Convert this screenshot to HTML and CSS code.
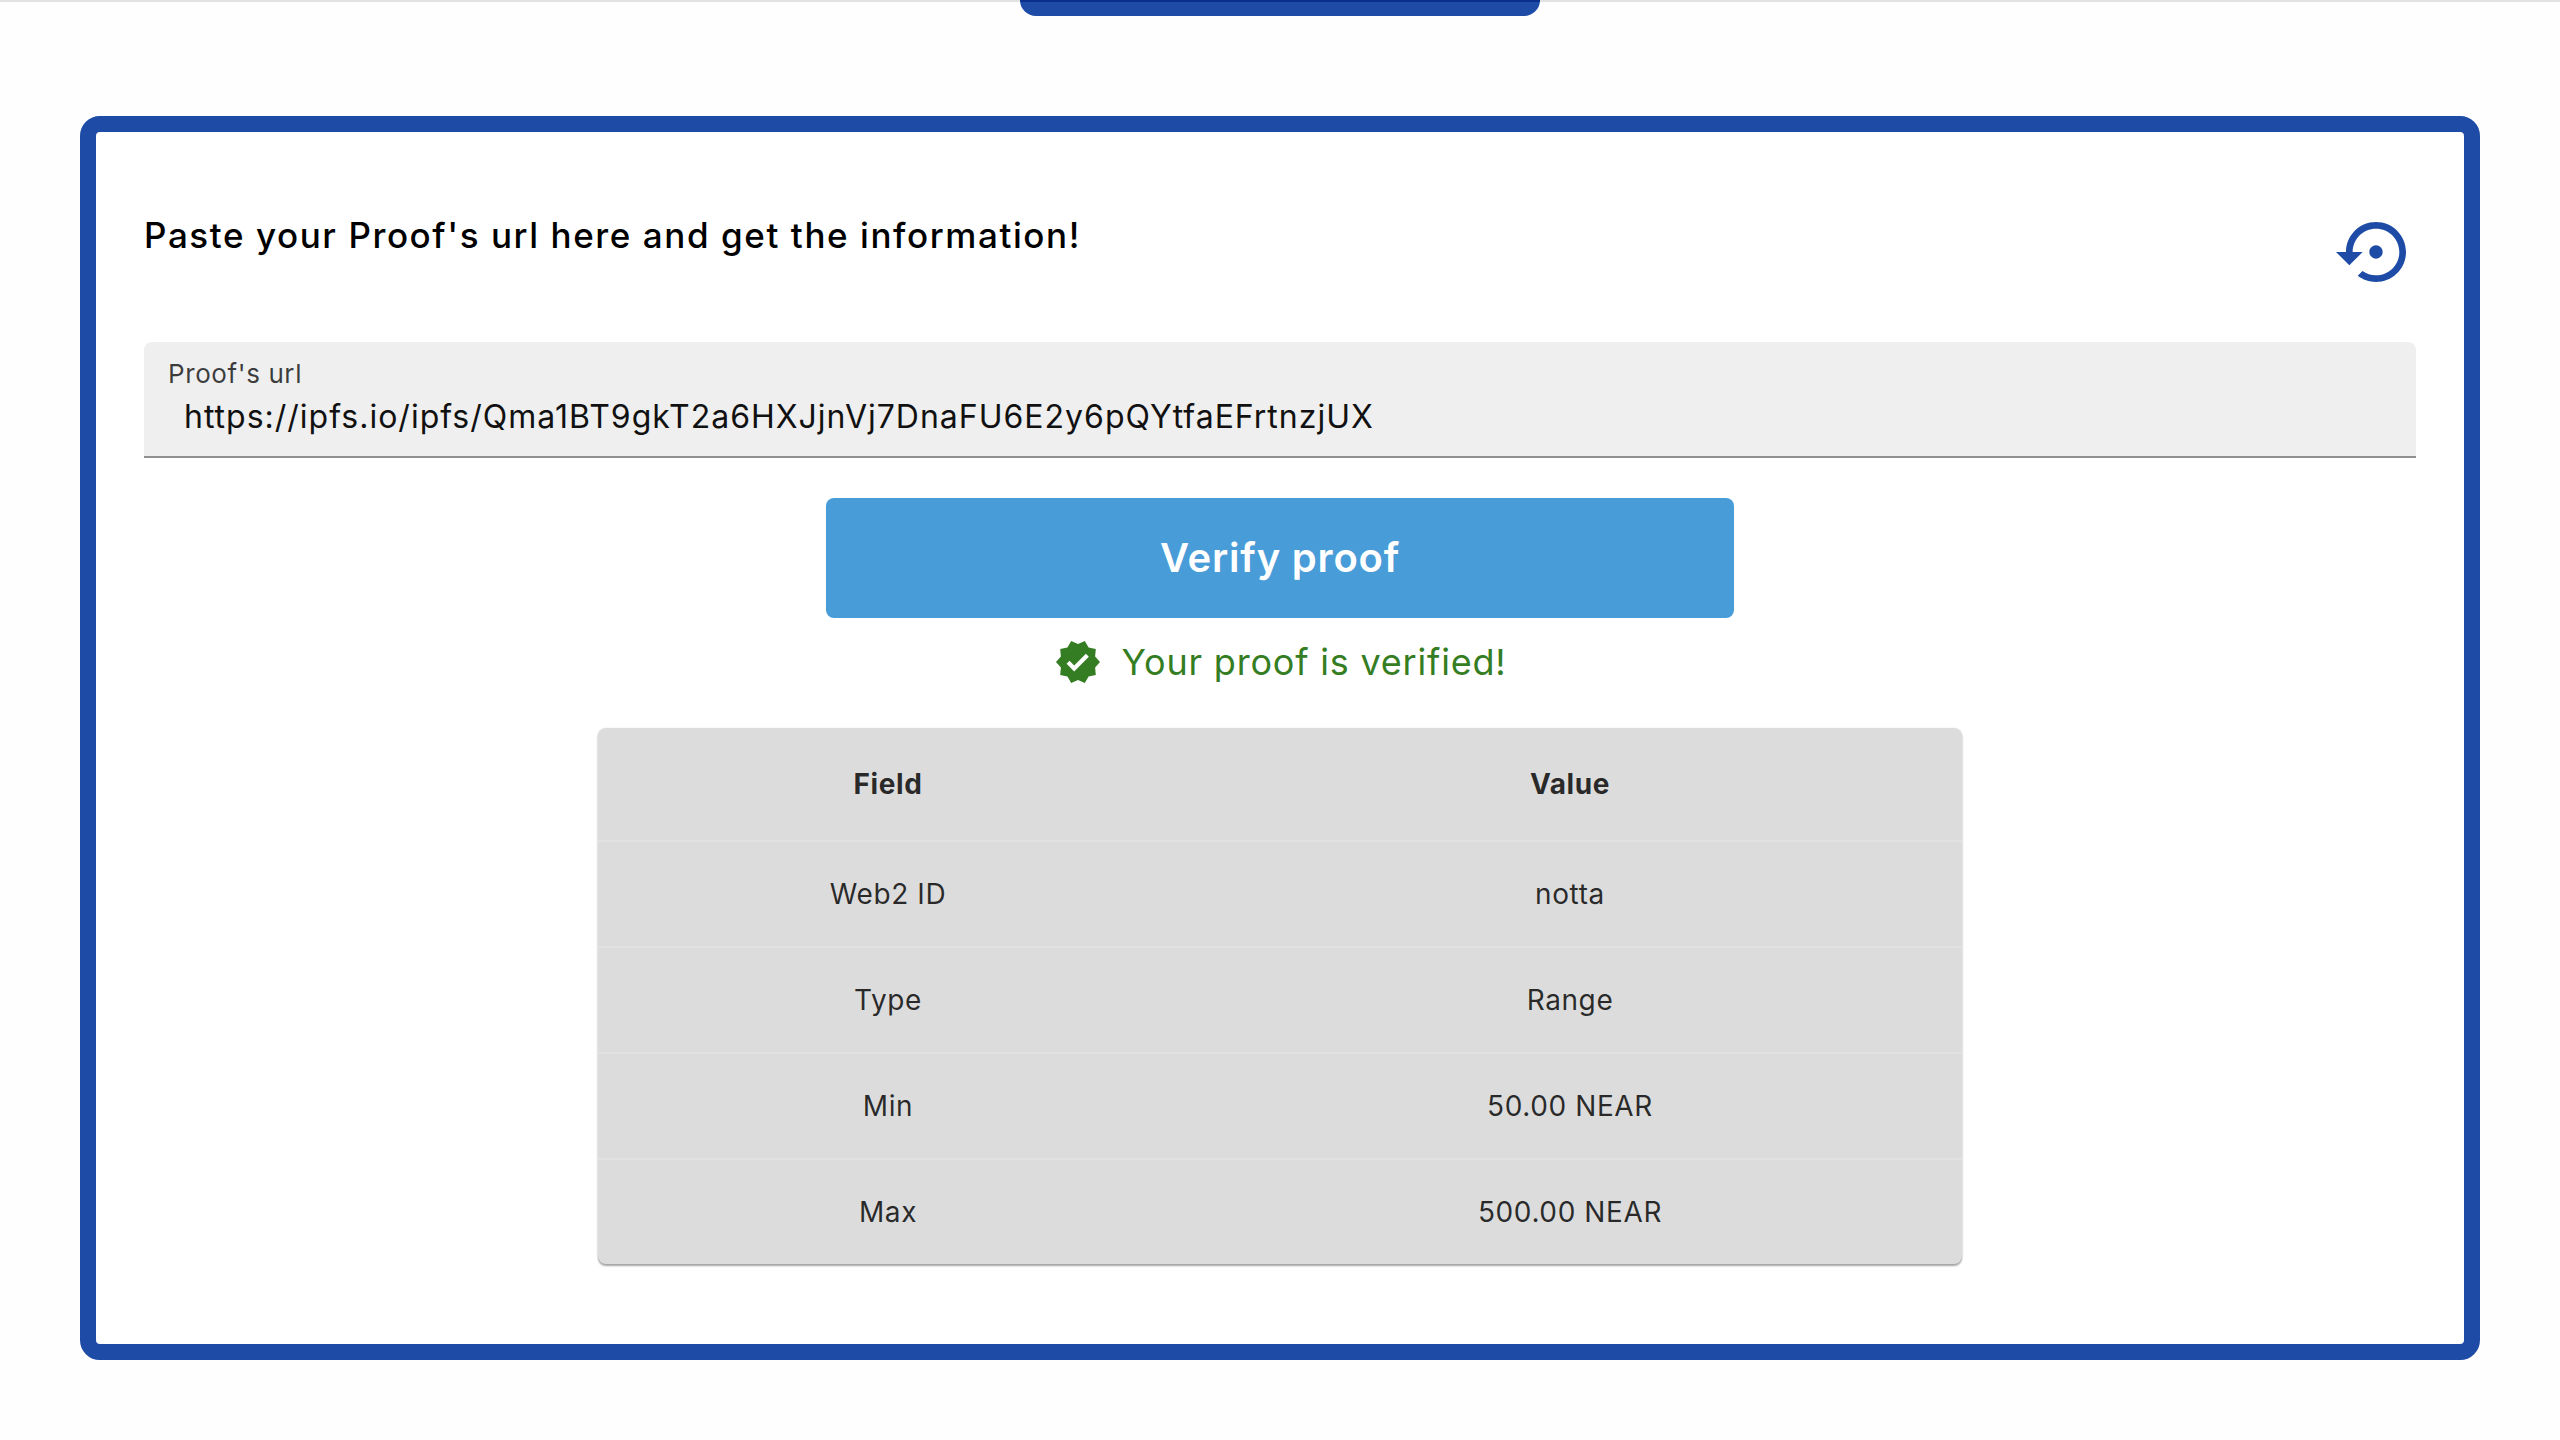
FILE: index.html
```html
<!DOCTYPE html>
<html lang="en">
<head>
<meta charset="utf-8">
<title>Verify proof</title>
<link rel="stylesheet" href="styles.css">
</head>
<body>
<header class="topbar"><div class="tab"></div></header>
<main class="card">
  <div class="head">
    <h1 class="title">Paste your Proof's url here and get the information!</h1>
    <svg class="reset" viewBox="0 0 24 24"><path d="M14 12c0-1.1-.9-2-2-2s-2 .9-2 2 .9 2 2 2 2-.9 2-2zm-2-9c-4.97 0-9 4.03-9 9H0l4 4 4-4H5c0-3.87 3.13-7 7-7s7 3.13 7 7-3.13 7-7 7c-1.51 0-2.91-.49-4.06-1.3l-1.42 1.44C8.04 20.3 9.94 21 12 21c4.97 0 9-4.03 9-9s-4.03-9-9-9z"/></svg>
  </div>
  <div class="field">
    <label class="label" for="url">Proof's url</label>
    <input class="input" id="url" value="https://ipfs.io/ipfs/Qma1BT9gkT2a6HXJjnVj7DnaFU6E2y6pQYtfaEFrtnzjUX">
  </div>
  <button class="verify">Verify proof</button>
  <div class="status">
    <svg class="badge" viewBox="0 0 24 24"><path d="m23 12-2.44-2.79.34-3.69-3.61-.82-1.89-3.2L12 2.96 8.6 1.5 6.71 4.69 3.1 5.5l.34 3.7L1 12l2.44 2.79-.34 3.7 3.61.82L8.6 22.5l3.4-1.47 3.4 1.46 1.89-3.19 3.61-.82-.34-3.69L23 12zm-12.91 4.72-3.8-3.81 1.48-1.48 2.32 2.33 5.85-5.87 1.48 1.48-7.33 7.35z"/></svg>
    <span>Your proof is verified!</span>
  </div>
  <div class="table-wrap">
    <table class="info">
      <colgroup><col class="col-field"><col class="col-value"></colgroup>
      <thead><tr><th>Field</th><th>Value</th></tr></thead>
      <tbody>
        <tr><td>Web2 ID</td><td>notta</td></tr>
        <tr><td>Type</td><td>Range</td></tr>
        <tr><td>Min</td><td>50.00 NEAR</td></tr>
        <tr class="last"><td>Max</td><td>500.00 NEAR</td></tr>
      </tbody>
    </table>
  </div>
</main>
</body>
</html>
```
FILE: styles.css
```css
* { box-sizing: border-box; }
html, body { margin: 0; }
body {
  background: #fefefe;
  font-family: "Inter", "Liberation Sans", sans-serif;
  height: 1440px;
  overflow: hidden;
}
.topbar {
  display: flex;
  justify-content: center;
  height: 16px;
  background: linear-gradient(#e2e2e2 2px, transparent 2px);
}
.tab {
  width: 520px;
  height: 16px;
  background: #1e4ba6;
  border-top: 2px solid #0a2e8c;
  border-radius: 0 0 16px 16px;
}
.card {
  display: flex;
  flex-direction: column;
  align-items: center;
  width: 2400px;
  height: 1244px;
  margin: 100px auto 0;
  padding: 80px 48px 0;
  background: #fff;
  border: 16px solid #1e4ba6;
  border-radius: 20px;
}
.head {
  display: flex;
  justify-content: space-between;
  width: 100%;
  height: 130px;
}
.title {
  margin: 0;
  font-size: 35px;
  font-weight: 450;
  line-height: 46px;
  letter-spacing: 1.58px;
  color: #000;
}
.reset {
  width: 80px;
  height: 80px;
  fill: #1e4ba6;
}
.field {
  width: 100%;
  height: 116px;
  padding: 16px 24px 0;
  background: #efefef;
  border-bottom: 2px solid #8f8f8f;
  border-radius: 8px 8px 0 0;
}
.label {
  display: block;
  font-size: 26px;
  line-height: 32px;
  letter-spacing: .6px;
  color: rgba(0,0,0,.75);
}
.input {
  display: block;
  width: 100%;
  margin: 5px 0 0;
  padding: 0 16px;
  border: 0;
  background: transparent;
  font: 400 32px/44px "Inter", "Liberation Sans", sans-serif;
  letter-spacing: 1px;
  color: #111;
}
.verify {
  display: block;
  width: 908px;
  height: 120px;
  margin-top: 40px;
  border: 0;
  border-radius: 8px;
  background: #489cd8;
  color: #fff;
  font: 600 40px/48px "Inter", "Liberation Sans", sans-serif;
  letter-spacing: .8px;
}
.status {
  display: flex;
  align-items: center;
  gap: 20px;
  height: 48px;
  margin-top: 20px;
  color: #357d22;
  font-size: 36px;
  font-weight: 400;
  letter-spacing: .8px;
}
.badge {
  width: 48px;
  height: 48px;
  fill: #357d22;
}
.table-wrap {
  width: 1364px;
  margin-top: 42px;
  background: #dcdcdc;
  border-radius: 8px;
  box-shadow: 0 2px 2px rgba(0,0,0,.35), 0 0 2px rgba(0,0,0,.08);
  overflow: hidden;
}
.info {
  width: 100%;
  border-collapse: collapse;
  table-layout: fixed;
  font-size: 28px;
  letter-spacing: .6px;
  color: rgba(0,0,0,.82);
}
.col-field { width: 580px; }
.info th, .info td {
  padding: 0;
  text-align: center;
  border-bottom: 2px solid #e1e1e1;
}
.info th { height: 113px; font-weight: 700; }
.info td { height: 106px; font-weight: 400; }
.info .last td { height: 105px; border-bottom: 0; }
```
